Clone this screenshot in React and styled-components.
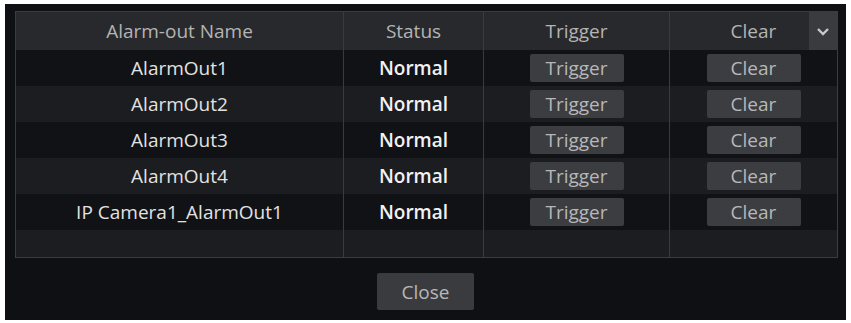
import React from 'react';
import styled, { createGlobalStyle } from 'styled-components';

const GlobalStyle = createGlobalStyle`
  html, body {
    margin: 0;
    padding: 0;
    background: #ffffff;
  }
  body {
    font-family: "Open Sans", "Liberation Sans", sans-serif;
  }
`;

const Panel = styled.div`
  margin: 4px 5px 3px 5px;
  height: 316px;
  background: #0f1013;
  padding: 7px 8px 0 10px;
  box-sizing: border-box;
  display: flex;
  flex-direction: column;
`;

const Table = styled.div`
  position: relative;
  height: 247px;
  border: 1px solid #3b3c3f;
  box-sizing: border-box;
  background: #1c1d20;
  display: grid;
  grid-template-columns: 327px 140px 186px 1fr;
  grid-template-rows: 38px repeat(5, 36px) 1fr;
`;

const HeadCell = styled.div`
  background: #28292c;
  color: #b4b4b4;
  font-size: 19px;
  display: flex;
  align-items: center;
  justify-content: center;
  border-left: ${({ $first }) => ($first ? 'none' : '1px solid #3a3b3e')};
`;

const Cell = styled.div`
  background: ${({ $odd }) => ($odd ? '#111215' : '#1c1d20')};
  color: ${({ $bold }) => ($bold ? '#f2f2f2' : '#e2e2e2')};
  font-size: 19px;
  font-weight: ${({ $bold }) => ($bold ? 600 : 400)};
  display: flex;
  align-items: center;
  justify-content: center;
  border-left: ${({ $first }) => ($first ? 'none' : '1px solid #3a3b3e')};
`;

const RowButton = styled.button`
  width: 94px;
  height: 28px;
  border: none;
  border-radius: 2px;
  background: #3c3d41;
  color: #b8b8b8;
  font-family: inherit;
  font-size: 19px;
  line-height: 28px;
  padding: 0;
  cursor: pointer;
`;

const DropButton = styled.button`
  position: absolute;
  top: 0;
  right: 0;
  width: 28px;
  height: 38px;
  border: none;
  background: #3a3b3e;
  display: flex;
  align-items: center;
  justify-content: center;
  padding: 0;
`;

const Footer = styled.div`
  flex: 1;
  display: flex;
  justify-content: center;
  padding-top: 15px;
  padding-right: 2px;
`;

const CloseButton = styled.button`
  width: 97px;
  height: 37px;
  border: none;
  border-radius: 2px;
  background: #3a3b3e;
  color: #b8b8b8;
  font-family: inherit;
  font-size: 19px;
  padding: 0;
`;

const rows = ['AlarmOut1', 'AlarmOut2', 'AlarmOut3', 'AlarmOut4', 'IP Camera1_AlarmOut1'];

function App() {
  return (
    <>
      <GlobalStyle />
      <Panel>
        <Table>
          <HeadCell $first>Alarm-out Name</HeadCell>
          <HeadCell>Status</HeadCell>
          <HeadCell>Trigger</HeadCell>
          <HeadCell>Clear</HeadCell>
          {rows.map((name, i) => (
            <React.Fragment key={name}>
              <Cell $first $odd={i % 2 === 0}>{name}</Cell>
              <Cell $odd={i % 2 === 0} $bold>Normal</Cell>
              <Cell $odd={i % 2 === 0}>
                <RowButton>Trigger</RowButton>
              </Cell>
              <Cell $odd={i % 2 === 0}>
                <RowButton>Clear</RowButton>
              </Cell>
            </React.Fragment>
          ))}
          <Cell $first />
          <Cell />
          <Cell />
          <Cell />
          <DropButton>
            <svg width="14" height="9" viewBox="0 0 14 9">
              <path d="M2 2 L7 7 L12 2" fill="none" stroke="#c8c8c8" strokeWidth="2.4" />
            </svg>
          </DropButton>
        </Table>
        <Footer>
          <CloseButton>Close</CloseButton>
        </Footer>
      </Panel>
    </>
  );
}

export default App;
